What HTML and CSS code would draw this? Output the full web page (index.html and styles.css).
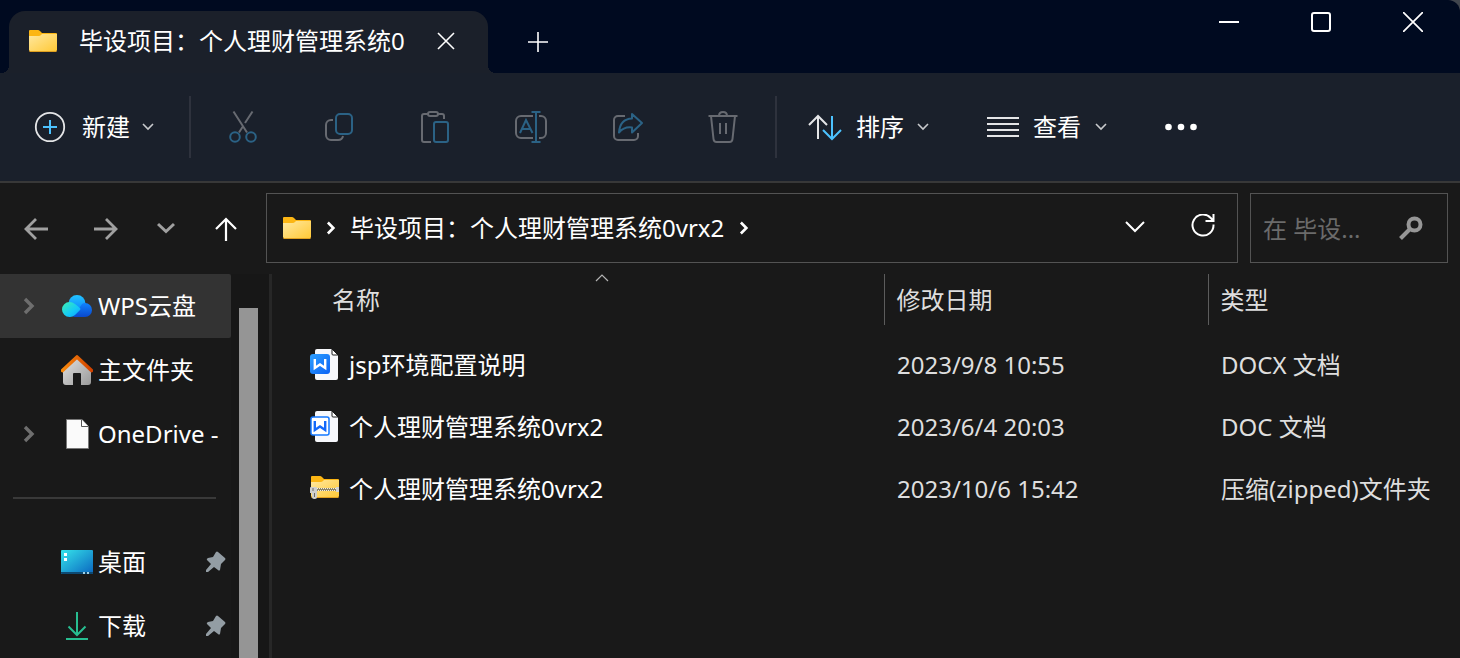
FILE: index.html
```html
<!DOCTYPE html>
<html lang="zh-CN">
<head>
    <meta charset="UTF-8">
    <meta name="viewport" content="width=device-width, initial-scale=1.0">
    <title>毕设项目：个人理财管理系统0vrx2</title>
    <link rel="stylesheet" href="styles.css">
</head>
<body>
    <!-- shared symbols -->
    <svg class="defs" aria-hidden="true">
        <defs>
            <linearGradient id="folderFill" x1="0" y1="0" x2="1" y2="1">
                <stop offset="0" stop-color="#ffe8a0"/>
                <stop offset="1" stop-color="#ffc937"/>
            </linearGradient>
            <linearGradient id="wpsFill" x1="0" y1="0" x2="1" y2="1">
                <stop offset="0" stop-color="#2ea0ff"/>
                <stop offset="1" stop-color="#0a62f5"/>
            </linearGradient>
            <symbol id="folder" viewBox="0 0 28 22">
                <path d="M0 1q0-1 1-1h8q1 0 2 1l2 2h14q1 0 1 1v8H0z" fill="#fcb614"/>
                <path d="M0 6h10q1 0 2-1l1-1h15v16q0 1-1 1H1q-1 0-1-1z" fill="url(#folderFill)"/>
                <path d="M0 20q0 2 1 2h26q1 0 1-2l-1 1H1z" fill="#e0a020"/>
            </symbol>
            <symbol id="chevDown" viewBox="0 0 12 8">
                <path d="M1 1l5 5 5-5" fill="none" stroke="#c8cacd" stroke-width="1.6"/>
            </symbol>
            <symbol id="chevRight" viewBox="0 0 12 18">
                <path d="M2 2l7 7-7 7" fill="none" stroke="currentColor" stroke-width="3.4"/>
            </symbol>
            <symbol id="pin" viewBox="0 0 22 22">
                <path d="M12 1q1-1 2 0l7 6q1 1 0 2l-4 4-1 6q-1 1-2 0l-4-3-6 5-2 0 0-2 5-6-4-4q-1-1 1-2l5-1z" fill="#939da4"/>
            </symbol>
        </defs>
    </svg>

    <header class="titlebar">
        <div class="tab">
            <svg width="28" height="22"><use href="#folder"/></svg>
            <span class="tab-title">毕设项目：个人理财管理系统0</span>
            <button type="button" class="tab-close" aria-label="关闭标签页">
                <svg width="18" height="18" viewBox="0 0 18 18"><path d="M1 1l16 16M17 1L1 17" stroke="#fff" stroke-width="1.6"/></svg>
            </button>
        </div>
        <button type="button" class="tab-add" aria-label="新标签页">
            <svg width="20" height="20" viewBox="0 0 20 20"><path d="M10 0v20M0 10h20" stroke="#fff" stroke-width="1.6"/></svg>
        </button>
        <div class="window-buttons">
            <button type="button" aria-label="最小化">
                <svg width="20" height="20" viewBox="0 0 20 20"><path d="M0 10h20" stroke="#fff" stroke-width="2"/></svg>
            </button>
            <button type="button" aria-label="最大化">
                <svg width="20" height="20" viewBox="0 0 20 20"><rect x="1" y="1" width="18" height="18" rx="2" fill="none" stroke="#fff" stroke-width="2"/></svg>
            </button>
            <button type="button" aria-label="关闭">
                <svg width="20" height="20" viewBox="0 0 20 20"><path d="M0 0l20 20M20 0L0 20" stroke="#fff" stroke-width="1.7"/></svg>
            </button>
        </div>
    </header>

    <div class="toolbar">
        <button type="button" class="tool-text tool-new">
            <svg width="32" height="32" viewBox="0 0 32 32" fill="none">
                <circle cx="16" cy="16" r="14.2" stroke="#e4e5e7" stroke-width="1.8"/>
                <path d="M16 9v14M9 16h14" stroke="#4cc2ff" stroke-width="2"/>
            </svg>
            <span>新建</span>
            <svg width="12" height="8"><use href="#chevDown"/></svg>
        </button>
        <div class="tool-group">
            <button type="button" class="tool" aria-label="剪切" disabled>
                <svg width="36" height="36" viewBox="0 0 36 36">
                    <path class="gray" d="M8.5 2.5L22 23.5M27.5 2.5L20 14M17.5 18L14 23.5"/>
                    <circle class="blue" cx="10" cy="28" r="4.8"/>
                    <circle class="blue" cx="26" cy="28" r="4.8"/>
                </svg>
            </button>
            <button type="button" class="tool" aria-label="复制" disabled>
                <svg width="36" height="36" viewBox="0 0 36 36">
                    <path class="gray" d="M12 11h-2a5 5 0 0 0-5 5v10a5 5 0 0 0 5 5h7a5 5 0 0 0 5-4"/>
                    <rect class="blue" x="15" y="5" width="16" height="20" rx="4"/>
                </svg>
            </button>
            <button type="button" class="tool" aria-label="粘贴" disabled>
                <svg width="36" height="36" viewBox="0 0 36 36">
                    <path class="gray" d="M11 5H7q-2 0-2 2v24q0 2 2 2h7M21 5h4q2 0 2 2v3"/>
                    <rect class="gray" x="11" y="3" width="10" height="4" rx="2"/>
                    <rect class="blue" x="17" y="13" width="14" height="20" rx="2"/>
                </svg>
            </button>
            <button type="button" class="tool" aria-label="重命名" disabled>
                <svg width="36" height="36" viewBox="0 0 36 36">
                    <path class="gray" d="M20 7H8a5 5 0 0 0-5 5v12a5 5 0 0 0 5 5h12M26 7h2a5 5 0 0 1 5 5v12a5 5 0 0 1-5 5h-2"/>
                    <path class="blue" d="M18.5 3h9M23 3v30M18.5 33h9M7 24l6-13 6.5 13M9 20h8.5"/>
                </svg>
            </button>
            <button type="button" class="tool" aria-label="共享" disabled>
                <svg width="36" height="36" viewBox="0 0 36 36">
                    <path class="gray" d="M16 7H9a4 4 0 0 0-4 4v16a4 4 0 0 0 4 4h16a4 4 0 0 0 4-4v-3"/>
                    <path class="blue" stroke-linejoin="round" d="M23 5l10 9-10 9.500V18.500q-8-1-13 5Q11 10 23 9.500z"/>
                </svg>
            </button>
            <button type="button" class="tool" aria-label="删除" disabled>
                <svg width="36" height="36" viewBox="0 0 36 36">
                    <path class="gray" d="M3.5 7h29M14 7q0-4 4-4t4 4M6 7l2.500 23q.3 3 3 3h13q2.700 0 3-3L30 7M15 14v11M21 14v11"/>
                </svg>
            </button>
        </div>
        <button type="button" class="tool-text tool-sort">
            <svg width="36" height="36" viewBox="0 0 36 36" fill="none" stroke-width="2">
                <path d="M11 30V8M2 16l9-9 9 9" stroke="#e4e5e7"/>
                <path d="M25 7v22M16 21l9 9 9-9" stroke="#4cc2ff"/>
            </svg>
            <span>排序</span>
            <svg width="12" height="8"><use href="#chevDown"/></svg>
        </button>
        <button type="button" class="tool-text tool-view">
            <svg width="32" height="20" viewBox="0 0 32 20"><path d="M0 1h32M0 7h32M0 13h32M0 19h32" stroke="#e4e5e7" stroke-width="2"/></svg>
            <span>查看</span>
            <svg width="12" height="8"><use href="#chevDown"/></svg>
        </button>
        <button type="button" class="tool-more" aria-label="查看更多">
            <svg width="32" height="8" viewBox="0 0 32 8" fill="#fff">
                <circle cx="3.5" cy="4" r="3.3"/><circle cx="16" cy="4" r="3.3"/><circle cx="28.500" cy="4" r="3.3"/>
            </svg>
        </button>
    </div>

    <div class="navbar">
        <div class="nav-buttons">
            <button type="button" class="nav-back" aria-label="后退">
                <svg width="26" height="24" viewBox="0 0 26 24"><path d="M25 13H3M13 3L3 13l10 10" fill="none" stroke="#a0a0a0" stroke-width="2.8"/></svg>
            </button>
            <button type="button" aria-label="前进">
                <svg width="26" height="24" viewBox="0 0 26 24"><path d="M1 13h22M13 3l10 10-10 10" fill="none" stroke="#a0a0a0" stroke-width="2.8"/></svg>
            </button>
            <button type="button" aria-label="最近浏览的位置">
                <svg width="18" height="12" viewBox="0 0 18 12"><path d="M1 2l8 7.5L17 2" fill="none" stroke="#a0a0a0" stroke-width="3"/></svg>
            </button>
            <button type="button" aria-label="上移">
                <svg width="24" height="26" viewBox="0 0 24 26"><path d="M12 26V4M2 14L12 4l10 10" fill="none" stroke="#fff" stroke-width="2.2"/></svg>
            </button>
        </div>
        <nav class="address" aria-label="地址">
            <svg width="28" height="22"><use href="#folder"/></svg>
            <svg class="crumb-arrow" width="10" height="14"><use href="#chevRight"/></svg>
            <a href="#">毕设项目：个人理财管理系统0vrx2</a>
            <svg class="crumb-arrow" width="10" height="14"><use href="#chevRight"/></svg>
            <div class="address-actions">
                <button type="button" aria-label="以前的位置">
                    <svg width="20" height="12" viewBox="0 0 20 12"><path d="M1 1l9 9 9-9" fill="none" stroke="#fff" stroke-width="2"/></svg>
                </button>
                <button type="button" aria-label="刷新">
                    <svg width="24" height="26" viewBox="0 0 24 26"><path d="M22.5 10.5A10.500 10.500 0 1 1 19.800 4L22 6.500M22.500 0v7h-8" fill="none" stroke="#fff" stroke-width="2"/></svg>
                </button>
            </div>
        </nav>
        <form class="search">
            <input type="text" id="searchBox" placeholder="在 毕设..." aria-label="搜索">
            <button type="submit" aria-label="开始搜索">
                <svg width="24" height="24" viewBox="0 0 24 24" fill="none" stroke="#969696"><circle cx="15.5" cy="8.5" r="6" stroke-width="4"/><path d="M11 13l-9.500 9.500" stroke-width="4"/></svg>
            </button>
        </form>
    </div>

    <main class="content">
        <aside class="sidebar">
            <ul>
                <li class="selected">
                    <a href="#">
                        <svg class="expand" width="12" height="18"><use href="#chevRight"/></svg>
                        <svg class="item-icon" width="32" height="32" viewBox="0 0 32 32">
                            <defs>
                                <linearGradient id="cloudLeft" x1="0" y1="0" x2="1" y2="1"><stop offset="0" stop-color="#3df0b0"/><stop offset=".6" stop-color="#14c8f8"/><stop offset="1" stop-color="#0a9cff"/></linearGradient>
                                <linearGradient id="cloudTop" x1="0" y1="0" x2="0" y2="1"><stop offset="0" stop-color="#22c4ff"/><stop offset="1" stop-color="#0a80ff"/></linearGradient>
                                <linearGradient id="cloudRight" x1="0" y1="0" x2="0" y2="1"><stop offset="0" stop-color="#1083ff"/><stop offset="1" stop-color="#0a48cc"/></linearGradient>
                            </defs>
                            <circle cx="16" cy="13.5" r="8.500" fill="url(#cloudTop)"/>
                            <path d="M12 27l9-13q1-1 3-1a7 7 0 0 1 0 14z" fill="url(#cloudRight)"/>
                            <path d="M8.500 12q3 0 5.500 2l5 4q1 1 0 2l-5 5q-2 2-5 2H8.500a7.500 7.500 0 1 1 0-15z" fill="url(#cloudLeft)"/>
                        </svg>
                        <span>WPS云盘</span>
                    </a>
                </li>
                <li>
                    <a href="#">
                        <svg class="item-icon" width="32" height="32" viewBox="0 0 32 32">
                            <defs>
                                <linearGradient id="homeWall" x1="0" y1="0" x2="1" y2="1"><stop offset="0" stop-color="#e2e2e2"/><stop offset="1" stop-color="#9a9a9a"/></linearGradient>
                                <linearGradient id="homeRoof" x1="0" y1="0" x2="1" y2="0"><stop offset="0" stop-color="#f98a0c"/><stop offset="1" stop-color="#d14200"/></linearGradient>
                            </defs>
                            <path d="M2 16L16 3l14 13v12q0 3-3 3h-7V20q0-1-1-1h-6q-1 0-1 1v11H5q-3 0-3-3z" fill="url(#homeWall)"/>
                            <path d="M1.5 16.5L16 3l14.500 13.500" fill="none" stroke="url(#homeRoof)" stroke-width="3.6" stroke-linecap="round" stroke-linejoin="round"/>
                        </svg>
                        <span>主文件夹</span>
                    </a>
                </li>
                <li>
                    <a href="#">
                        <svg class="expand" width="12" height="18"><use href="#chevRight"/></svg>
                        <svg class="item-icon" width="32" height="32" viewBox="0 0 32 32">
                            <path d="M5.5 1.5H21l6.500 7V30.500h-22z" fill="#fafafa" stroke="#777"/>
                            <path d="M20.5 1.5v7h7" fill="#fff" stroke="#555"/>
                        </svg>
                        <span>OneDrive -</span>
                    </a>
                </li>
            </ul>
            <hr>
            <ul>
                <li>
                    <a href="#">
                        <svg class="item-icon" width="32" height="32" viewBox="0 0 32 32">
                            <defs><linearGradient id="deskFill" x1="0" y1="0" x2="1" y2="1"><stop offset="0" stop-color="#35e3ea"/><stop offset="1" stop-color="#0a66c0"/></linearGradient></defs>
                            <rect y="4" width="32" height="24" rx="1" fill="url(#deskFill)"/>
                            <path d="M0 26h32v1q0 1-1 1H1q-1 0-1-1z" fill="#0d4a73"/>
                            <path d="M3 7h3v3H3zM3 12h3v3H3z" fill="#fff"/>
                            <path d="M22 26h2v2h-2zM26 26h2v2h-2z" fill="#9fd0e8"/>
                        </svg>
                        <span>桌面</span>
                        <svg class="pin" width="22" height="22"><use href="#pin"/></svg>
                    </a>
                </li>
                <li>
                    <a href="#">
                        <svg class="item-icon" width="32" height="32" viewBox="0 0 32 32" fill="none" stroke="#27bd90" stroke-width="2">
                            <path d="M16 2v23M7.5 16.5L16 25l8.500-8.500M5 29h22"/>
                        </svg>
                        <span>下载</span>
                        <svg class="pin" width="22" height="22"><use href="#pin"/></svg>
                    </a>
                </li>
            </ul>
        </aside>
        <div class="scrollbar"><div class="thumb"></div></div>

        <section class="files">
            <table>
                <colgroup>
                    <col>
                    <col class="col-date">
                    <col class="col-type">
                </colgroup>
                <thead>
                    <tr>
                        <th class="th-name">
                            <button type="button">名称
                                <svg class="sort-mark" width="14" height="8" viewBox="0 0 14 8"><path d="M1 7l6-6 6 6" fill="none" stroke="#b4b4b4" stroke-width="1.2"/></svg>
                            </button>
                        </th>
                        <th><button type="button">修改日期</button></th>
                        <th><button type="button">类型</button></th>
                    </tr>
                </thead>
                <tbody>
                    <tr>
                        <td>
                            <a class="file" href="#">
                                <svg width="30" height="32" viewBox="0 0 30 32">
                                    <path d="M7 0h15l6 6v23q0 2-2 2H7q-2 0-2-2V2q0-2 2-2z" fill="#f7f8fc"/>
                                    <path d="M22 0v5q0 1 1 1h5z" fill="#fff" stroke="#1a1a1a"/>
                                    <rect y="5" width="20" height="20" rx="3" fill="url(#wpsFill)"/>
                                    <path d="M4.8 10v9L10 15.500l5.200 3.500v-9" fill="none" stroke="#fff" stroke-width="2.4"/>
                                </svg>
                                <span>jsp环境配置说明</span>
                            </a>
                        </td>
                        <td>2023/9/8 10:55</td>
                        <td>DOCX 文档</td>
                    </tr>
                    <tr>
                        <td>
                            <a class="file" href="#">
                                <svg width="30" height="32" viewBox="0 0 30 32">
                                    <path d="M7 0h15l6 6v23q0 2-2 2H7q-2 0-2-2V2q0-2 2-2z" fill="#f7f8fc"/>
                                    <path d="M22 0v5q0 1 1 1h5z" fill="#fff" stroke="#1a1a1a"/>
                                    <rect x="1" y="6" width="18" height="18" rx="2" fill="#fff" stroke="#1478ff" stroke-width="1.5"/>
                                    <path d="M4.8 10v9L10 15.500l5.200 3.500v-9" fill="none" stroke="#1268fa" stroke-width="2.4"/>
                                </svg>
                                <span>个人理财管理系统0vrx2</span>
                            </a>
                        </td>
                        <td>2023/6/4 20:03</td>
                        <td>DOC 文档</td>
                    </tr>
                    <tr>
                        <td>
                            <a class="file" href="#">
                                <svg width="30" height="32" viewBox="0 0 30 32">
                                    <use href="#folder" x="1" y="3" width="28" height="22"/>
                                    <path d="M6 15h23v3H6z" fill="#8d8468"/>
                                    <path d="M7 15.500h22" stroke="#f4f0e0" stroke-dasharray="1 1"/>
                                    <path d="M8 17.500h21" stroke="#f4f0e0" stroke-dasharray="1 1"/>
                                    <path d="M26 14h3v5h-3z" fill="#d4d4d4"/>
                                    <path d="M1 14h5q1 0 1 1v9q0 2-2 2H4q-2 0-2-2v-4H0v-5q0-1 1-1z" fill="#cfcfcf"/>
                                    <path d="M3 15v3M4.500 20v4" stroke="#6e6a60"/>
                                </svg>
                                <span>个人理财管理系统0vrx2</span>
                            </a>
                        </td>
                        <td>2023/10/6 15:42</td>
                        <td>压缩(zipped)文件夹</td>
                    </tr>
                </tbody>
            </table>
        </section>
    </main>
</body>
</html>
```
FILE: styles.css
```css
* {
    box-sizing: border-box;
}

html {
    background-color: #40454d;
}

body {
    display: flex;
    flex-direction: column;
    min-height: 100vh;
    margin: 0;
    font-family: "Noto Sans", "Noto Sans CJK SC", sans-serif;
    font-size: 24px;
    line-height: 32px;
    color: #fff;
}

button,
input {
    margin: 0;
    padding: 0;
    border: none;
    background: none;
    font: inherit;
    color: inherit;
}

button {
    display: flex;
    align-items: center;
    justify-content: center;
    cursor: pointer;
}

a {
    color: inherit;
    text-decoration: none;
}

svg {
    display: block;
    flex: none;
}

.defs {
    position: absolute;
    width: 0;
    height: 0;
}

/* title bar */
.titlebar {
    display: flex;
    height: 73px;
    background-color: #000a20;
    border-top-right-radius: 12px;
}

.tab {
    position: relative;
    display: flex;
    align-items: center;
    width: 479px;
    margin: 11px 0 0 9px;
    padding: 0 33px 2px 20px;
    border-radius: 16px 16px 0 0;
    background-color: #1b202a;
}

/* flared corners at the foot of the tab */
.tab::before,
.tab::after {
    content: "";
    position: absolute;
    bottom: 0;
    width: 8px;
    height: 8px;
}

.tab::before {
    right: 100%;
    background: radial-gradient(circle at 0 0, transparent 8px, #1b202a 8px);
}

.tab::after {
    left: 100%;
    background: radial-gradient(circle at 100% 0, transparent 8px, #1b202a 8px);
}

.tab-title {
    flex: 1;
    margin: 0 20px 0 22px;
    white-space: nowrap;
}

.tab-add {
    width: 60px;
    margin: 11px 0 0 20px;
}

.window-buttons {
    display: flex;
    height: 44px;
    margin: 0 1px 0 auto;
}

.window-buttons button {
    width: 92px;
}

/* toolbar */
.toolbar {
    display: flex;
    align-items: center;
    height: 110px;
    background-color: #1a202b;
    border-bottom: 2px solid #383838;
}

.tool-text {
    gap: 13px;
}

.tool-new {
    gap: 16px;
    padding: 0 35px 0 34px;
}

.tool-new svg:last-child {
    margin-left: -4px;
}

.tool-group {
    display: flex;
    justify-content: center;
    width: 588px;
    height: 62px;
    border: 2px solid #2e323d;
    border-width: 0 2px;
}

.tool {
    width: 96px;
}

.gray,
.blue {
    fill: none;
    stroke-width: 2;
}

.gray {
    stroke: #676a71;
}

.blue {
    stroke: #2b6285;
}

.tool-sort {
    margin-left: 30px;
}

.tool-view {
    gap: 14px;
    margin-left: 58px;
}

.tool-more {
    margin-left: 58px;
}

/* navigation row */
.navbar {
    display: flex;
    gap: 12px;
    padding: 10px 12px 11px 6px;
    background-color: #191919;
}

.nav-buttons {
    display: flex;
}

.nav-buttons button {
    width: 60px;
}

.nav-buttons .nav-back {
    margin-right: 10px;
}

.address,
.search {
    display: flex;
    align-items: center;
    height: 70px;
    border: 1px solid #535353;
}

.address {
    flex: 1;
    margin-left: -2px;
    padding-left: 16px;
}

.crumb-arrow {
    margin: 0 14px 0 15px;
}

.address-actions {
    display: flex;
    align-self: stretch;
    margin-left: auto;
}

.address-actions button {
    width: 68px;
    padding-bottom: 2px;
}

.search {
    width: 198px;
    padding: 0 24px 0 12px;
}

.search input {
    flex: 1;
    min-width: 0;
    height: 100%;
    outline: none;
}

.search input::placeholder {
    color: #6b6b6b;
    opacity: 1;
}

/* main area */
.content {
    display: flex;
    flex: 1;
    background-color: #191919;
}

.sidebar {
    width: 231px;
}

.sidebar ul {
    margin: 0;
    padding: 0;
    list-style: none;
}

.sidebar li a {
    display: grid;
    grid-template-areas: "expand icon label pin";
    grid-template-columns: 33px 32px 1fr auto;
    column-gap: 5px;
    align-items: center;
    height: 64px;
    padding: 0 5px 0 23px;
}

.sidebar .selected a {
    background-color: #333;
    border-radius: 0 2px 2px 0;
}

.sidebar span {
    grid-area: label;
    white-space: nowrap;
}

.expand {
    grid-area: expand;
    color: #6e6e6e;
}

.item-icon {
    grid-area: icon;
}

.pin {
    grid-area: pin;
}

.sidebar hr {
    height: 2px;
    margin: 31px 15px 31px 13px;
    border: none;
    background-color: #393939;
}

.scrollbar {
    display: flex;
    width: 41px;
    padding: 34px 11px 0 8px;
    background-color: #171717;
    border-right: 3px solid #272727;
}

.thumb {
    flex: 1;
    background-color: #959595;
}

/* file list */
.files {
    flex: 1;
    padding-left: 38px;
}

table {
    width: 100%;
    table-layout: fixed;
    border-collapse: collapse;
    color: #dedede;
}

.col-date {
    width: 324px;
}

.col-type {
    width: 252px;
}

th {
    height: 51px;
    padding: 0;
    border-left: 1px solid #5c5c5c;
    font-weight: normal;
    text-align: left;
}

th button {
    position: relative;
    justify-content: flex-start;
    width: 100%;
    height: 51px;
    padding-left: 12px;
}

.th-name {
    padding-left: 10px;
    border-left: none;
}

.sort-mark {
    position: absolute;
    top: 0;
    left: 50%;
    transform: translateX(-50%);
}

td {
    height: 62px;
    padding: 0 0 0 13px;
    white-space: nowrap;
}

td:first-child {
    padding-left: 0;
    color: #fff;
}

tbody::before {
    content: "";
    display: block;
    height: 9px;
}

.file {
    display: flex;
    align-items: center;
    gap: 9px;
}
```
